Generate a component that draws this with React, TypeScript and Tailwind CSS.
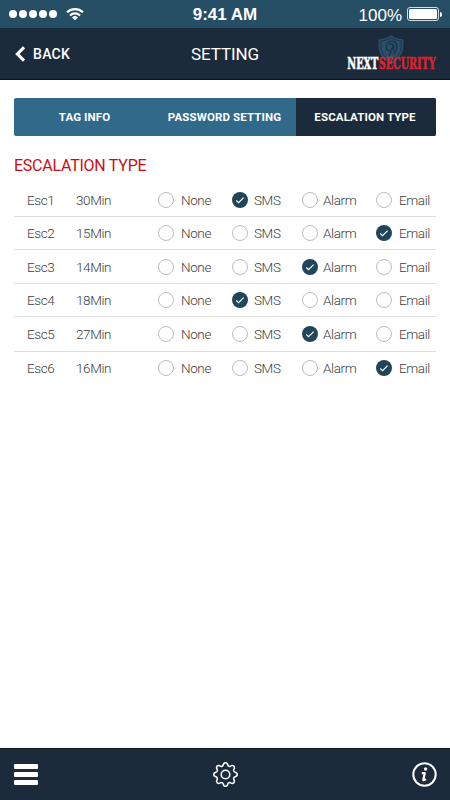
import clsx from "clsx";
import { BsGear } from "react-icons/bs";

type Option = "None" | "SMS" | "Alarm" | "Email";

const rows: { name: string; time: string; value: Option; height: string }[] = [
  { name: "Esc1", time: "30Min", value: "SMS", height: "h-[34px]" },
  { name: "Esc2", time: "15Min", value: "Email", height: "h-[33px]" },
  { name: "Esc3", time: "14Min", value: "Alarm", height: "h-[34px]" },
  { name: "Esc4", time: "18Min", value: "SMS", height: "h-[33px]" },
  { name: "Esc5", time: "27Min", value: "Alarm", height: "h-[35px]" },
  { name: "Esc6", time: "16Min", value: "Email", height: "h-[32px]" },
];

const options: { label: Option; width: string; gap: string }[] = [
  { label: "None", width: "w-[74px]", gap: "gap-[7px]" },
  { label: "SMS", width: "w-[70px]", gap: "gap-[6px]" },
  { label: "Alarm", width: "w-[74px]", gap: "gap-[5px]" },
  { label: "Email", width: "w-[60px]", gap: "gap-[7px]" },
];

function StatusBar() {
  return (
    <div className="grid h-7 grid-cols-3 items-center bg-[#264f66] text-white">
      <div className="flex items-center pl-[9px]">
        <div className="flex gap-[2px]">
          {[0, 1, 2, 3, 4].map((i) => (
            <span key={i} className="size-[8px] rounded-full bg-white" />
          ))}
        </div>
        <svg className="ml-[9px] h-[14px] w-[18px]" viewBox="0 0 18 14" fill="none" stroke="#fff" strokeWidth="2.1">
          <path d="M1 5.3a11.6 11.6 0 0 1 16 0" />
          <path d="M3.9 8.4a7.4 7.4 0 0 1 10.2 0" />
          <path d="M9 13.3 6 10.4a4.4 4.4 0 0 1 6 0z" fill="#fff" stroke="none" />
        </svg>
      </div>
      <div className="pt-px text-center font-['Liberation_Sans'] text-[17px] font-bold leading-none">
        <span className="whitespace-nowrap">9:41 AM</span>
      </div>
      <div className="flex items-center justify-end pr-[8px]">
        <span className="mr-[5px] pt-[2px] font-['Liberation_Sans'] text-[17px] leading-none">100%</span>
        <div className="h-[14px] w-[32px] rounded-[3px] border border-white/80 p-px">
          <div className="h-full rounded-[1.5px] bg-white" />
        </div>
        <div className="ml-px h-[5px] w-[2px] rounded-r-full bg-white" />
      </div>
    </div>
  );
}

function Logo() {
  return (
    <svg className="h-[44px] w-[94px]" viewBox="0 -2 94 44">
      <path d="M46 1c-4 3.2-8 4-12.500 4.200C33 17 35 24 46 30c11-6 13-13 12.500-24.800C54 5 50 4.200 46 1z" fill="#294e68" />
      <path d="M46 3.500c-3.500 2.500-6.500 3.200-10.300 3.500C35.500 17 37.500 22.500 46 27.500c8.500-5 10.500-10.500 10.300-20.500-3.800-.3-6.800-1-10.300-3.500z" fill="none" stroke="#1b3348" strokeWidth=".9" />
      <path d="M42 16c-2-5 1-9 4.500-9s6.500 3 5 8l-2.500 5M44 10c3-1 5 1 4 3s-3 2-2 5l-2 4M42 16l3 1M49 12l-1 5" fill="none" stroke="#1a3044" strokeWidth="1.200" />
      <g fontFamily="DejaVu Serif" fontWeight="700" fontSize="17" strokeWidth=".7">
        <text transform="translate(2.300 35) scale(.58 1)" textLength="53.500" lengthAdjust="spacingAndGlyphs" fill="#fff" stroke="#fff">NEXT</text>
        <text transform="translate(33.800 35) scale(.58 1)" textLength="98" lengthAdjust="spacingAndGlyphs" fill="#d8232e" stroke="#d8232e">SECURITY</text>
      </g>
    </svg>
  );
}

function Header() {
  return (
    <header className="grid h-[52px] grid-cols-3 items-center border-b border-[#0c151d] bg-[#1b2b3b] text-white">
      <button className="flex items-center pl-[15px]">
        <svg className="h-[16px] w-[10px]" viewBox="0 0 10 16" fill="none" stroke="#fff" strokeWidth="3.200">
          <path d="M9 1.300 2.400 8 9 14.700" />
        </svg>
        <span className="ml-[8px] text-sm font-medium tracking-[0.3px]">BACK</span>
      </button>
      <h1 className="pt-[2px] text-center text-[17px] tracking-[-0.1px]">SETTING</h1>
      <div className="flex justify-end pr-[11px] pt-px">
        <Logo />
      </div>
    </header>
  );
}

function Tabs() {
  return (
    <nav className="flex h-[38px] overflow-hidden rounded-[2px] bg-[#31698b] text-[11.5px] font-bold tracking-[0.12px] text-white">
      <button className="w-[141px] pt-[2px]">TAG INFO</button>
      <button className="w-[141px] whitespace-nowrap pt-[2px] pr-[2px]">PASSWORD SETTING</button>
      <button className="flex-1 bg-[#1b2b3b] pt-[2px] pr-[2px]">ESCALATION TYPE</button>
    </nav>
  );
}

function Radio({ checked }: { checked: boolean }) {
  if (!checked) {
    return <span className="size-4 shrink-0 rounded-full border-[1.5px] border-[#bdbdbd] bg-white" />;
  }
  return (
    <span className="size-4 shrink-0 rounded-full bg-[#20465c]">
      <svg viewBox="0 0 16 16" fill="none" stroke="#fff" strokeWidth="1.200">
        <path d="m4.300 8.500 2.300 2.200 5-5" />
      </svg>
    </span>
  );
}

function InfoIcon() {
  return (
    <svg className="size-[25px]" viewBox="0 0 25 25" fill="none" stroke="#fff">
      <circle cx="12.500" cy="12.500" r="11.200" strokeWidth="2" />
      <circle cx="13.600" cy="7" r="1.700" fill="#fff" stroke="none" />
      <path d="M9.800 11.200h3l-1.500 6.200c-.2 1 .8.900 2.700-.3" strokeWidth="2.200" strokeLinejoin="round" />
    </svg>
  );
}

export default function App() {
  return (
    <div className="flex h-screen w-full flex-col bg-white font-[Roboto,sans-serif]">
      <StatusBar />
      <Header />
      <main className="flex-1 px-[14px] pt-[18px]">
        <Tabs />
        <h2 className="mt-[18px] h-[29px] text-base leading-6 tracking-[-0.25px] text-[#cb0d14]">ESCALATION TYPE</h2>
        <ul className="text-[13.5px] font-light tracking-[-0.4px] text-[#3d3d3d]">
          {rows.map((row, i) => (
            <li
              key={row.name}
              className={clsx("flex items-center pl-[13px]", row.height, i < rows.length - 1 && "border-b border-[#dedede]")}
            >
              <span className="w-[49px] pt-px">{row.name}</span>
              <span className="w-[82px] pt-px">{row.time}</span>
              {options.map((o) => (
                <label key={o.label} className={clsx("flex shrink-0 items-center", o.width, o.gap)}>
                  <Radio checked={row.value === o.label} />
                  <span className="pt-px">{o.label}</span>
                </label>
              ))}
            </li>
          ))}
        </ul>
      </main>
      <footer className="flex h-[52px] items-center justify-between border-t border-[#0c151d] bg-[#1b2b3b] pl-[14px] pr-[13px] text-white">
        <div className="flex w-[24px] flex-col gap-[3px]">
          <span className="h-[5px] rounded-[1px] bg-white" />
          <span className="h-[5px] rounded-[1px] bg-white" />
          <span className="h-[5px] rounded-[1px] bg-white" />
        </div>
        <BsGear size={25} />
        <InfoIcon />
      </footer>
    </div>
  );
}
